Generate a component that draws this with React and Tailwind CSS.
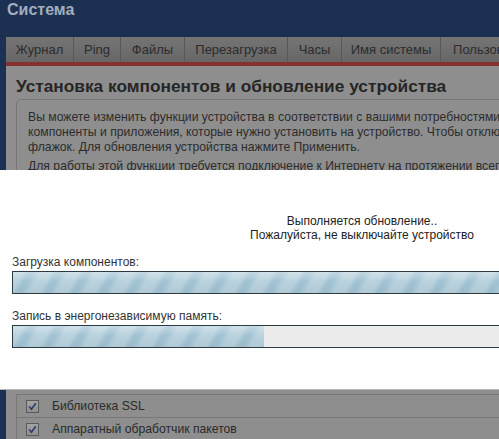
import React from "react";

const tabs = [
  { label: "Журнал", w: "w-[68px]" },
  { label: "Ping", w: "w-[47px]" },
  { label: "Файлы", w: "w-[64px]" },
  { label: "Перезагрузка", w: "w-[103px]" },
  { label: "Часы", w: "w-[54px]" },
  { label: "Имя системы", w: "w-[99px]" },
  { label: "Пользователи", w: "w-[110px]" },
];

function Check() {
  return (
    <span className="flex h-[13px] w-[13px] items-center justify-center border border-[#5a5a5a] bg-[linear-gradient(to_bottom,#a4a4a4,#8f8f8f)]">
      <svg width="9" height="9" viewBox="0 0 9 9">
        <path d="M1.2 4.6 L3.4 7.2 L7.8 1.2" fill="none" stroke="#2a3c66" strokeWidth="1.6" />
      </svg>
    </span>
  );
}

const stripes =
  "bg-[image:linear-gradient(to_bottom,rgba(255,255,255,0.35),rgba(255,255,255,0)_45%,rgba(0,0,0,0.04)),repeating-linear-gradient(120deg,#b9d2de_0px,#b9d2de_9px,#a2c3d4_14px,#a2c3d4_18px,#b9d2de_24px)]";

export default function App() {
  return (
    <div className="relative h-[439px] w-[499px] overflow-hidden bg-[#1c3151] font-['Liberation_Sans',Arial,sans-serif]">
      <div className="h-[37px] pl-[7px] pt-[2px] text-[16px] font-bold leading-[16px] text-[#a2adbd]">
        Система
      </div>
      <div className="ml-[6px] w-[800px]">
        <div className="flex h-[25px] bg-[linear-gradient(to_bottom,#747474,#676767)]">
          {tabs.map((t) => (
            <div
              key={t.label}
              className={`${t.w} flex shrink-0 items-center justify-center border-r border-[#585858] text-[13px] text-[#2c2c2c]`}
            >
              {t.label}
            </div>
          ))}
        </div>
        <div className="h-[4px] bg-[#873030]" />
        <div className="bg-[#8e8e8e] pl-[10px] pt-[10px]">
          <h1 className="text-[17.3px] font-bold leading-[20px] text-[#262626]">
            Установка компонентов и обновление устройства
          </h1>
          <div className="mt-[3px] rounded-[5px] border border-[#767676] pb-[10px] pl-[11px] pt-[10px] text-[12.2px] leading-[15px] text-[#2c2c2c]">
            <p className="whitespace-nowrap">
              Вы можете изменить функции устройства в соответствии с вашими потребностями
              <br />
              компоненты и приложения, которые нужно установить на устройство. Чтобы отключить
              <br />
              флажок. Для обновления устройства нажмите Применить.
            </p>
            <p className="mt-[4px] whitespace-nowrap">
              Для работы этой функции требуется подключение к Интернету на протяжении всего
            </p>
          </div>
          <div className="mt-[209px] border-l border-[#787878] text-[12.2px] text-[#2a2a2a]">
            <div className="flex h-[23px] items-center gap-[13px] border-t border-[#777777] pl-[9px]">
              <Check />
              <span>Библиотека SSL</span>
            </div>
            <div className="flex h-[23px] items-center gap-[13px] border-t border-[#777777] pl-[9px]">
              <Check />
              <span>Аппаратный обработчик пакетов</span>
            </div>
          </div>
        </div>
      </div>

      <div className="absolute left-0 top-[170px] h-[220px] w-[724px] border-b border-[#b8b8b8] bg-white px-[12px] pt-[44px]">
        <div className="text-center text-[12px] leading-[14px] text-[#222]">
          <div>Выполняется обновление..</div>
          <div>Пожалуйста, не выключайте устройство</div>
        </div>
        <div className="mt-[13px] text-[12px] leading-[14px] text-[#333]">Загрузка компонентов:</div>
        <div className={`mt-[2px] h-[23px] border border-[#2c3a42] ${stripes}`} />
        <div className="mt-[15px] text-[12px] leading-[14px] text-[#333]">
          Запись в энергонезависимую память:
        </div>
        <div className="mt-[2px] flex h-[23px] border border-[#2c3a42] bg-[#ececec]">
          <div className={`h-full w-[251px] ${stripes}`} />
        </div>
      </div>
    </div>
  );
}
